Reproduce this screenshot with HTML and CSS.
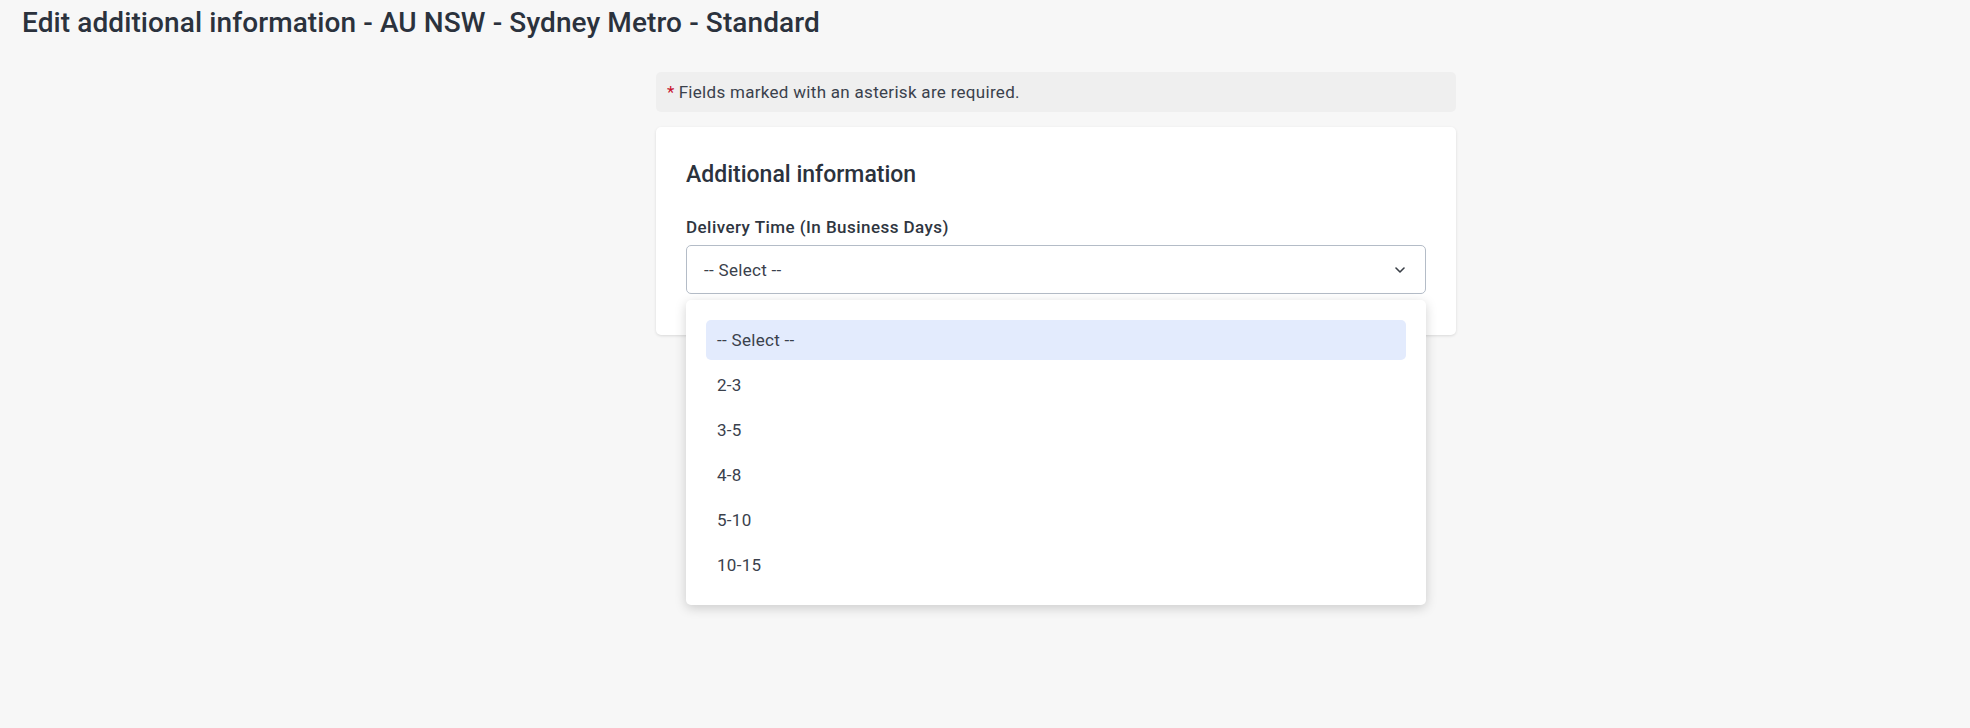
FILE: index.html
```html
<!DOCTYPE html>
<html lang="en">
<head>
<meta charset="utf-8">
<title>Edit additional information</title>
<link rel="stylesheet" href="styles.css">
</head>
<body>
<div class="page">
  <h1 class="page-title">Edit additional information - AU NSW - Sydney Metro - Standard</h1>
  <div class="content">
    <div class="form-col">
      <div class="notice"><span class="req">*</span> Fields marked with an asterisk are required.</div>
      <div class="card">
        <h2 class="card-title">Additional information</h2>
        <label class="field-label">Delivery Time (In Business Days)</label>
        <div class="select-wrap">
          <div class="select">
            <span class="select-value">-- Select --</span>
            <svg class="chevron" width="10" height="6" viewBox="0 0 10 6"><path d="M1 1l4 4 4-4" fill="none" stroke="#3a3f47" stroke-width="1.6" stroke-linecap="round" stroke-linejoin="round"/></svg>
          </div>
          <ul class="menu">
            <li class="option active">-- Select --</li>
            <li class="option">2-3</li>
            <li class="option">3-5</li>
            <li class="option">4-8</li>
            <li class="option">5-10</li>
            <li class="option">10-15</li>
          </ul>
        </div>
      </div>
    </div>
  </div>
</div>
</body>
</html>
```
FILE: styles.css
```css
html, body {
  margin: 0;
  padding: 0;
  background: #f7f7f7;
  height: 100%;
}
body {
  font-family: Roboto, "Liberation Sans", sans-serif;
  color: #2e3540;
}
.page {
  padding: 6px 0 0 22px;
}
.page-title {
  margin: 0;
  font-size: 28px;
  line-height: 34px;
  font-weight: 500;
  letter-spacing: 0.1px;
  color: #2b323d;
}
.content {
  padding-left: 120px;
  padding-top: 32px;
}
.form-col {
  width: 800px;
  margin: 0 auto;
}
.notice {
  background: #efefef;
  border-radius: 5px;
  height: 40px;
  display: flex;
  align-items: center;
  padding-left: 11px;
  font-size: 17px;
  letter-spacing: 0.3px;
  color: #3a414c;
}
.req {
  color: #c8102e;
  margin-right: 4px;
}
.card {
  margin-top: 15px;
  background: #fff;
  border-radius: 5px;
  box-shadow: 0 1px 3px rgba(0,0,0,0.12);
  padding: 34px 30px 41px 30px;
}
.card-title {
  margin: 0 0 28px 0;
  font-size: 23px;
  line-height: 28px;
  font-weight: 500;
  color: #2b323d;
}
.field-label {
  display: block;
  font-size: 17px;
  line-height: 20px;
  font-weight: 500;
  letter-spacing: 0.45px;
  margin-bottom: 8px;
  color: #2f3641;
}
.select-wrap {
  position: relative;
}
.select {
  height: 49px;
  box-sizing: border-box;
  border: 1px solid #b4bcc7;
  border-radius: 5px;
  display: flex;
  align-items: center;
  justify-content: space-between;
  padding: 0 20px 0 17px;
  font-size: 17px;
  letter-spacing: 0.3px;
  color: #3a414c;
}
.chevron {
  display: block;
}
.menu {
  position: absolute;
  top: 55px;
  left: 0;
  right: 0;
  margin: 0;
  list-style: none;
  background: #fff;
  border-radius: 5px;
  box-shadow: 0 3px 12px rgba(0,0,0,0.18);
  padding: 20px;
  display: flex;
  flex-direction: column;
  gap: 5px;
  z-index: 2;
}
.option {
  height: 40px;
  display: flex;
  align-items: center;
  padding-left: 11px;
  border-radius: 5px;
  font-size: 17px;
  letter-spacing: 0.3px;
  color: #3a414c;
}
.option.active {
  background: #e3ebfd;
}
```
